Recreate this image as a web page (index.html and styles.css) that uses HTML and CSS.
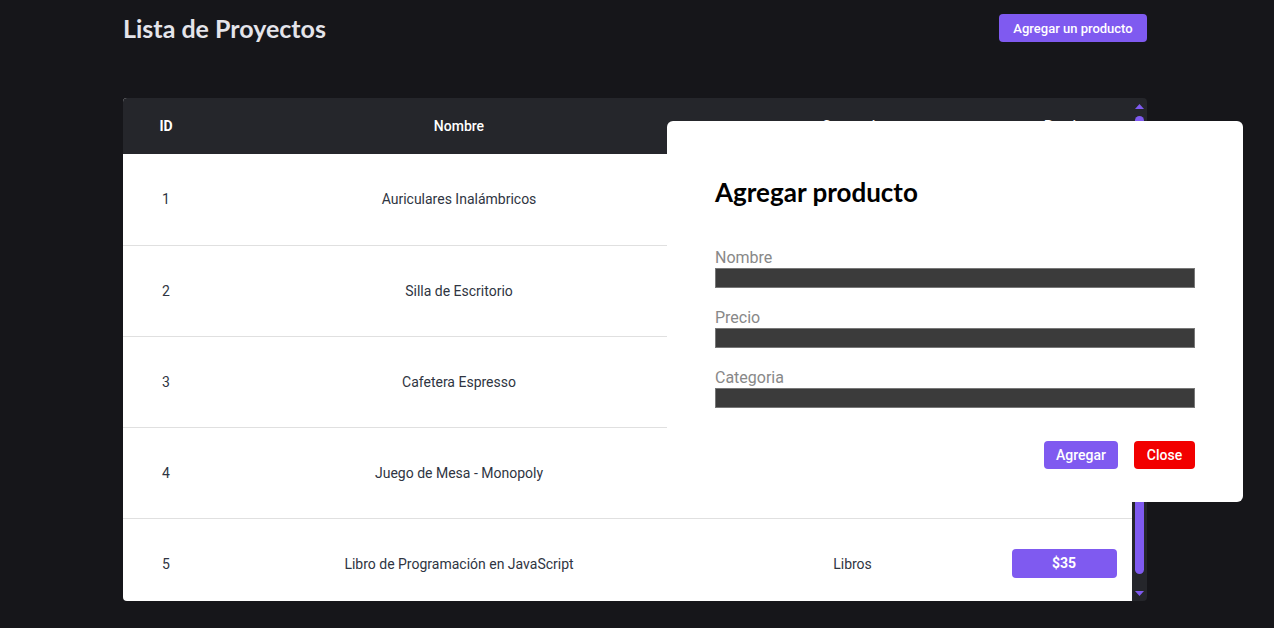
FILE: index.html
```html
<!DOCTYPE html>
<html lang="es">
<head>
<meta charset="utf-8">
<title>Lista de Proyectos</title>
<link rel="stylesheet" href="styles.css">
</head>
<body>
<main class="page">
  <header class="topbar">
    <h1 class="title">Lista de Proyectos</h1>
    <button class="btn btn-primary btn-add">Agregar un producto</button>
  </header>

  <div class="table-wrap">
    <div class="table-scroll">
      <table class="table">
        <thead>
          <tr>
            <th class="col-id">ID</th>
            <th class="col-name">Nombre</th>
            <th class="col-cat">Categoria</th>
            <th class="col-price">Precio</th>
          </tr>
        </thead>
        <tbody>
          <tr><td>1</td><td>Auriculares Inalámbricos</td><td>Electrónica</td><td><span class="price">$80</span></td></tr>
          <tr><td>2</td><td>Silla de Escritorio</td><td>Muebles</td><td><span class="price">$120</span></td></tr>
          <tr><td>3</td><td>Cafetera Espresso</td><td>Electrodomésticos</td><td><span class="price">$95</span></td></tr>
          <tr><td>4</td><td>Juego de Mesa - Monopoly</td><td>Juegos</td><td><span class="price">$25</span></td></tr>
          <tr><td>5</td><td>Libro de Programación en JavaScript</td><td>Libros</td><td><span class="price">$35</span></td></tr>
        </tbody>
      </table>
    </div>
    <div class="scrollbar" aria-hidden="true">
      <div class="sb-btn">
        <svg width="9" height="5" viewBox="0 0 9 5"><polygon points="4.5,0 9,5 0,5" fill="#7f5af0"/></svg>
      </div>
      <div class="sb-track">
        <div class="sb-thumb"></div>
      </div>
      <div class="sb-btn">
        <svg width="9" height="5" viewBox="0 0 9 5"><polygon points="0,0 9,0 4.5,5" fill="#7f5af0"/></svg>
      </div>
    </div>
  </div>
</main>

<div class="modal">
  <h2 class="modal-title">Agregar producto</h2>
  <form class="form">
    <label class="field">
      <span class="field-label">Nombre</span>
      <input class="field-input" type="text">
    </label>
    <label class="field">
      <span class="field-label">Precio</span>
      <input class="field-input" type="text">
    </label>
    <label class="field">
      <span class="field-label">Categoria</span>
      <input class="field-input" type="text">
    </label>
    <div class="actions">
      <button type="button" class="btn btn-primary btn-modal btn-agregar">Agregar</button>
      <button type="button" class="btn btn-danger btn-modal btn-close">Close</button>
    </div>
  </form>
</div>
</body>
</html>
```

FILE: styles.css
```css
* { box-sizing: border-box; }

html, body {
  margin: 0;
  padding: 0;
}

body {
  background: #16161a;
  font-family: Roboto, "Liberation Sans", sans-serif;
  width: 1274px;
  height: 628px;
  overflow: hidden;
}

.page {
  width: 1024px;
  margin-left: 123px;
}

.topbar {
  display: flex;
  justify-content: space-between;
  align-items: center;
  height: 58px;
  padding-top: 2px;
  margin-bottom: 40px;
}

.title {
  margin: 0;
  font-family: Lato, "Open Sans", sans-serif;
  font-weight: 700;
  font-size: 25px;
  color: #e4e4ea;
  position: relative;
  top: -2px;
}

.btn {
  border: none;
  border-radius: 4px;
  color: #fff;
  font-family: Roboto, "Liberation Sans", sans-serif;
  font-weight: 500;
  cursor: pointer;
  padding: 0;
}

.btn-primary { background: #7f5af0; }
.btn-danger { background: #f20000; }

.btn-add {
  width: 148px;
  height: 28px;
  font-size: 13px;
  position: relative;
  top: -2px;
}

.table-wrap {
  height: 503px;
  display: flex;
  border-radius: 4px;
  overflow: hidden;
}

.table-scroll {
  flex: 1;
  overflow: hidden;
  background: #fff;
}

.scrollbar {
  width: 15px;
  background: #25262b;
  display: flex;
  flex-direction: column;
}

.sb-btn {
  height: 16px;
  display: flex;
  align-items: center;
  justify-content: center;
}

.sb-btn svg { display: block; }

.sb-track {
  flex: 1;
  padding: 2px 3px 0;
}

.sb-thumb {
  height: 458px;
  background: #7f5af0;
  border-radius: 5px;
}

.table {
  width: 100%;
  border-collapse: collapse;
  table-layout: fixed;
}

.col-id { width: 86px; }
.col-name { width: 500px; }
.col-cat { width: 287px; }
.col-price { width: 136px; }

.table th {
  background: #25262b;
  color: #fff;
  font-weight: 500;
  font-size: 14px;
  height: 56px;
  text-align: center;
}

.table th.col-id { font-weight: 700; }

.table td {
  height: 91px;
  border-bottom: 1px solid #e0e0e0;
  text-align: center;
  font-size: 14px;
  color: #2f3542;
}

.price {
  display: inline-block;
  width: 105px;
  height: 29px;
  line-height: 29px;
  background: #7f5af0;
  color: #fff;
  font-weight: 700;
  border-radius: 4px;
}

.modal {
  position: absolute;
  left: 667px;
  top: 121px;
  width: 576px;
  height: 381px;
  background: #fff;
  border-radius: 6px;
  padding: 48px 48px 32px;
}

.modal-title {
  margin: 8px 0 0;
  font-family: Lato, "Open Sans", sans-serif;
  font-weight: 700;
  font-size: 26px;
  line-height: 30px;
  color: #000;
}

.form {
  margin-top: 41px;
  display: flex;
  flex-direction: column;
}

.field {
  display: flex;
  flex-direction: column;
  margin-bottom: 20px;
}

.field-label {
  color: #888;
  font-size: 16px;
  line-height: 19px;
  height: 20px;
}

.field-input {
  height: 20px;
  width: 480px;
  background: #3b3b3b;
  border: 1px solid #777;
  margin: 0;
  padding: 0;
}

.actions {
  display: flex;
  justify-content: flex-end;
  gap: 16px;
  margin-top: 13px;
}

.btn-modal {
  height: 28px;
  font-size: 14px;
}

.btn-agregar { width: 74px; }
.btn-close { width: 61px; }
```
